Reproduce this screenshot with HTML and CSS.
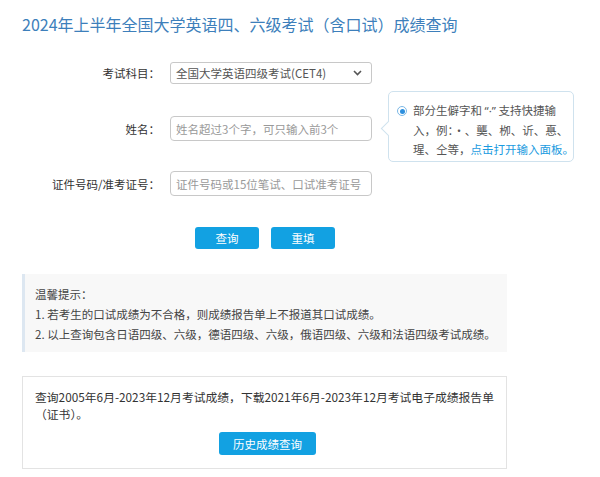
FILE: index.html
```html
<!DOCTYPE html>
<html lang="zh-CN">
<head>
<meta charset="utf-8">
<title>成绩查询</title>
<link rel="stylesheet" href="styles.css">
</head>
<body>
<div class="page">
  <h1 class="title">2024年上半年全国大学英语四、六级考试（含口试）成绩查询</h1>

  <div class="form">
    <div class="row row-select">
      <label class="label">考试科目：</label>
      <div class="select">
        <span>全国大学英语四级考试(CET4)</span>
        <svg class="chev" width="9" height="6" viewBox="0 0 9 6"><path d="M1 1 L4.5 4.5 L8 1" fill="none" stroke="#555" stroke-width="1.6"/></svg>
      </div>
    </div>
    <div class="row row-name">
      <label class="label">姓名：</label>
      <div class="input"><span class="ph">姓名超过3个字，可只输入前3个</span></div>
      <div class="tip">
        <span class="radio"><span class="dot"></span></span>
        <p class="tip-text">部分生僻字和 <span class="q">“·”</span> 支持快捷输<br>入，例：·、龑、栁、䜣、惪、<br>瑆、仝等，<a class="link">点击打开输入面板。</a></p>
      </div>
    </div>
    <div class="row row-id">
      <label class="label">证件号码/准考证号：</label>
      <div class="input"><span class="ph">证件号码或15位笔试、口试准考证号</span></div>
    </div>
    <div class="buttons">
      <button class="btn">查询</button>
      <button class="btn">重填</button>
    </div>
  </div>

  <div class="notice">
    <p>温馨提示：</p>
    <p>1. 若考生的口试成绩为不合格，则成绩报告单上不报道其口试成绩。</p>
    <p>2. 以上查询包含日语四级、六级，德语四级、六级，俄语四级、六级和法语四级考试成绩。</p>
  </div>

  <div class="history">
    <p class="history-text">查询2005年6月-2023年12月考试成绩，下载2021年6月-2023年12月考试电子成绩报告单（证书）。</p>
    <div class="history-btn-wrap"><button class="btn btn-wide">历史成绩查询</button></div>
  </div>
</div>
</body>
</html>
```

FILE: styles.css
```css
* { box-sizing: border-box; }
html, body { margin: 0; padding: 0; background: #fff; }
body {
  font-family: "Noto Sans CJK SC", "Noto Sans", sans-serif;
  font-size: 11.5px;
  color: #333;
}
p { margin: 0; }
.page { padding: 12px 0 0 22px; width: 600px; }
.title {
  margin: 0;
  font-size: 16px;
  font-weight: normal;
  line-height: 24px;
  color: #3d7fbb;
}
.form { margin-top: 26px; }
.row {
  display: flex;
  align-items: center;
  position: relative;
}
.label {
  width: 138px;
  text-align: right;
  margin-right: 10px;
  color: #333;
}
.select, .input {
  width: 202px;
  border: 1px solid #c8c8c8;
  border-radius: 4px;
  display: flex;
  align-items: center;
  padding: 0 5px;
}
.select { height: 22px; color: #555; justify-content: space-between; border-radius: 3px; }
.input { height: 25px; }
.ph { color: #999; white-space: nowrap; }
.chev { margin-right: 4px; }
.row-name { margin-top: 32px; }
.row-id { margin-top: 30px; }
.tip {
  position: absolute;
  left: 366px;
  top: -25px;
  width: 186px;
  height: 71px;
  border: 1px solid #cfe2ee;
  border-radius: 5px;
  background: #fff;
  display: flex;
  padding: 9px 0 0 8px;
}
.tip::before {
  content: "";
  position: absolute;
  left: -6px;
  top: 31px;
  width: 10px;
  height: 10px;
  background: #fff;
  border-left: 1px solid #cfe2ee;
  border-bottom: 1px solid #cfe2ee;
  transform: rotate(45deg);
}
.radio {
  width: 10px;
  height: 10px;
  border: 1px solid #7bb8e6;
  border-radius: 50%;
  display: flex;
  align-items: center;
  justify-content: center;
  margin-top: 5px;
  flex: none;
}
.dot { width: 5px; height: 5px; border-radius: 50%; background: #2d8fde; }
.tip-text {
  margin-left: 6px;
  line-height: 19.5px;
  color: #555;
  white-space: nowrap;
}
.q { font-family: "Noto Sans", sans-serif; }
.link { color: #1a9be0; }
.buttons {
  display: flex;
  gap: 12px;
  margin: 31px 0 0 173px;
}
.btn {
  font-family: inherit;
  font-size: 11.5px;
  color: #fff;
  background: #12a1e2;
  border: none;
  border-radius: 3px;
  width: 64px;
  height: 22px;
  padding: 0;
}
.notice {
  margin-top: 25px;
  width: 485px;
  height: 78px;
  background: #f8f8f8;
  border-left: 3px solid #dde7f1;
  padding: 10px 0 0 10px;
  color: #444;
  line-height: 20px;
}
.history {
  margin-top: 24px;
  width: 485px;
  height: 93px;
  border: 1px solid #e3e3e3;
  padding: 11px 6px 0 12px;
}
.history-text { line-height: 17px; color: #333; font-size: 11.8px; }
.history-btn-wrap { display: flex; justify-content: center; margin-top: 10px; }
.btn-wide { width: 97px; height: 23px; }
```
